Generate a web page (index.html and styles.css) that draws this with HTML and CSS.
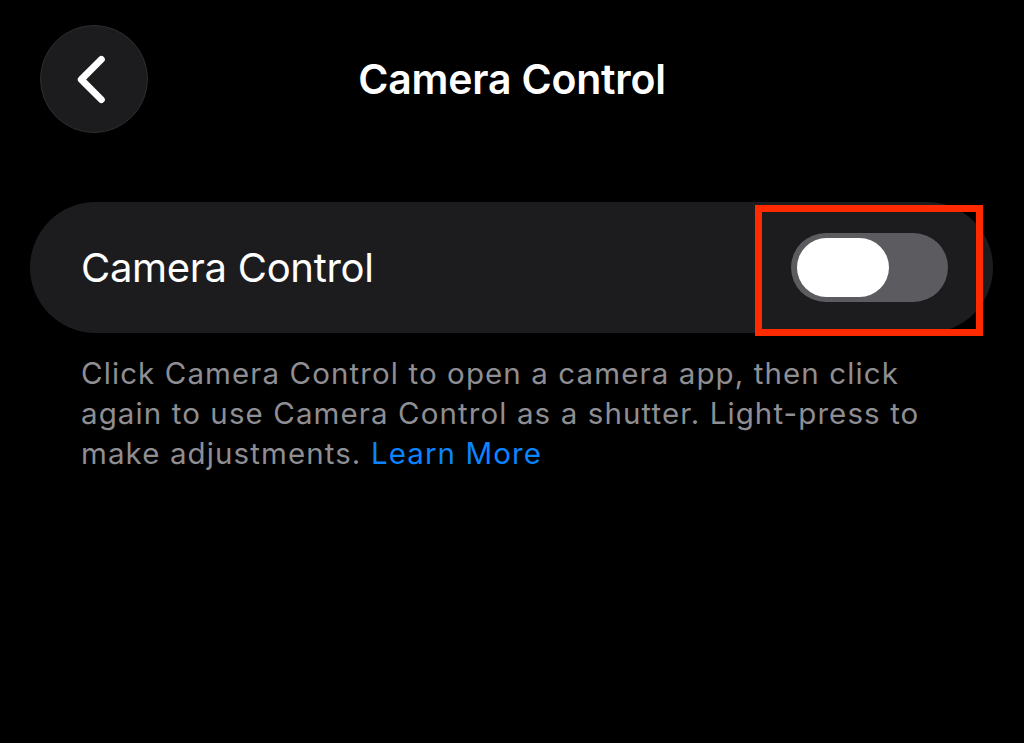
FILE: index.html
```html
<!DOCTYPE html>
<html lang="en">
<head>
<meta charset="utf-8">
<title>Camera Control</title>
<link rel="stylesheet" href="styles.css">
</head>
<body>
<div class="screen">
  <header class="nav">
    <button class="back" aria-label="Back">
      <svg viewBox="0 0 108 108" width="108" height="108" aria-hidden="true">
        <path d="M61.5 34 L41 54.5 L61.5 75" fill="none" stroke="#fff" stroke-width="7" stroke-linecap="round" stroke-linejoin="round"/>
      </svg>
    </button>
    <h1 class="title">Camera Control</h1>
    <span class="nav-spacer"></span>
  </header>

  <section class="card">
    <span class="card-label">Camera Control</span>
    <span class="toggle" role="switch" aria-checked="false"><span class="knob"></span></span>
    <span class="highlight" aria-hidden="true"></span>
  </section>

  <p class="footnote">Click Camera Control to open a camera app, then click again to use Camera Control as a shutter. Light-press to make adjustments. <a class="link" href="#">Learn More</a></p>
</div>
</body>
</html>
```

FILE: styles.css
```css
* { box-sizing: border-box; }
html, body {
  margin: 0;
  padding: 0;
  background: #000;
}
body {
  font-family: Inter, "Noto Sans", "Liberation Sans", sans-serif;
  color: #fff;
  width: 1024px;
  height: 743px;
  overflow: hidden;
}
.screen {
  display: flex;
  flex-direction: column;
}
.nav {
  display: grid;
  grid-template-columns: 108px 1fr 108px;
  align-items: center;
  padding: 25px 40px 0 40px;
}
.back {
  width: 108px;
  height: 108px;
  padding: 0;
  border-radius: 50%;
  background: #1c1c1e;
  border: 1.5px solid #2e2e30;
  display: flex;
  align-items: center;
  justify-content: center;
}
.back svg { display: block; }
.title {
  margin: 0;
  text-align: center;
  font-size: 41px;
  font-weight: 600;
  letter-spacing: -0.2px;
  line-height: 1;
}
.card {
  position: relative;
  margin: 69px 31px 0 30px;
  height: 131px;
  border-radius: 66px;
  background: #1c1c1e;
  display: flex;
  align-items: center;
  justify-content: space-between;
  padding: 0 45px 0 51px;
}
.card-label {
  font-size: 40px;
  font-weight: 400;
  letter-spacing: -0.3px;
}
.toggle {
  width: 157px;
  height: 69px;
  border-radius: 35px;
  background: #5b5b60;
  display: flex;
  align-items: center;
  padding: 0 6px;
}
.knob {
  width: 92px;
  height: 59px;
  border-radius: 30px;
  background: #fff;
}
.highlight {
  position: absolute;
  left: 725px;
  top: 3px;
  width: 228px;
  height: 131px;
  border: 7px solid #ff2a00;
}
.footnote {
  margin: 20px 60px 0 81px;
  font-size: 29.5px;
  line-height: 40px;
  color: #8e8e93;
  letter-spacing: 1.1px;
}
.link {
  color: #0a84ff;
  text-decoration: none;
}
```
